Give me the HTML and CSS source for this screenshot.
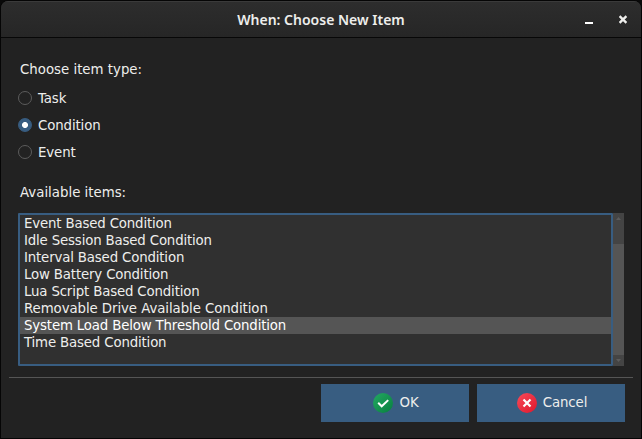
FILE: index.html
```html
<!DOCTYPE html>
<html lang="en">
<head>
<meta charset="utf-8">
<title>When: Choose New Item</title>
<link rel="stylesheet" href="styles.css">
</head>
<body>
<div class="window">
  <header class="titlebar">
    <h1 class="title">When: Choose New Item</h1>
    <div class="controls">
      <svg width="8" height="9" viewBox="0 0 8 9"><path d="M0 7h8v2H0z" fill="#fff"/></svg>
      <svg width="8" height="9" viewBox="0 0 8 9"><path d="M.6 1.100l6.800 6.800M7.400 1.100L.6 7.900" stroke="#eeeeec" stroke-width="2.300"/></svg>
    </div>
  </header>
  <main class="content">
    <p class="label">Choose item type:</p>
    <div class="radios">
      <div class="radio"><span class="dot"></span>Task</div>
      <div class="radio"><span class="dot checked"></span>Condition</div>
      <div class="radio"><span class="dot"></span>Event</div>
    </div>
    <p class="label items-label">Available items:</p>
    <div class="listbox">
      <ul class="list">
        <li>Event Based Condition</li>
        <li>Idle Session Based Condition</li>
        <li>Interval Based Condition</li>
        <li>Low Battery Condition</li>
        <li>Lua Script Based Condition</li>
        <li class="loose">Removable Drive Available Condition</li>
        <li class="selected">System Load Below Threshold Condition</li>
        <li>Time Based Condition</li>
      </ul>
      <div class="scrollbar">
        <svg width="11" height="11" viewBox="0 0 11 11"><path d="M3 7L5.500 4L8 7z" fill="#5c5c5c"/></svg>
        <div class="thumb"></div>
        <svg width="11" height="11" viewBox="0 0 11 11"><path d="M3 4L5.500 7L8 4z" fill="#5c5c5c"/></svg>
      </div>
    </div>
  </main>
  <footer class="footer">
    <div class="button">
      <svg width="20" height="20" viewBox="0 0 20 20"><defs><linearGradient id="g" x2="1" y2="1"><stop stop-color="#23a962"/><stop offset="1" stop-color="#087f3f"/></linearGradient></defs><circle cx="10" cy="10" r="10" fill="url(#g)"/><path d="M5.200 9.800l3.500 3.500 6.500-6.200" fill="none" stroke="#fff" stroke-width="2"/></svg>
      <span>OK</span>
    </div>
    <div class="button cancel">
      <svg width="20" height="20" viewBox="0 0 20 20"><defs><linearGradient id="r" x2="1" y2="1"><stop stop-color="#f84a59"/><stop offset="1" stop-color="#de172c"/></linearGradient></defs><circle cx="10" cy="10" r="10" fill="url(#r)"/><path d="M6.500 6.500l7 7M13.500 6.500l-7 7" stroke="#fff" stroke-width="2.200"/></svg>
      <span>Cancel</span>
    </div>
  </footer>
</div>
</body>
</html>
```
FILE: styles.css
```css
* { box-sizing: border-box; }
body {
  margin: 0;
  background: #090909;
  color: #eeeeec;
  font: 13.33px/17px "DejaVu Sans", sans-serif;
}
svg { display: block; }
.window {
  width: 642px;
  height: 439px;
  border: 1px solid #050505;
  border-radius: 8px 8px 0 0;
  background: #222;
  overflow: hidden;
}
.titlebar {
  display: grid;
  grid-template-columns: 70px 1fr 70px;
  align-items: center;
  height: 37px;
  border-top: 1px solid #3a3a3a;
  border-bottom: 1px solid #070707;
  background: linear-gradient(#2d2d2d, #262626);
}
.title {
  grid-column: 2;
  margin: 0;
  text-align: center;
  font: 600 14px/19px "Noto Sans", sans-serif;
}
.controls {
  display: flex;
  gap: 26px;
  padding-left: 14px;
}
.content { padding: 23px 17px 0; }
.label { margin: 0 2px; }
.radios { margin-top: 12px; }
.radio {
  display: flex;
  align-items: flex-start;
  gap: 6px;
  height: 17px;
  margin-bottom: 10px;
  letter-spacing: -0.12px;
}
.dot {
  width: 14px;
  height: 14px;
  margin-top: 1px;
  border: 1px solid #5c5c5c;
  border-radius: 50%;
}
.dot.checked {
  border-color: #385d81;
  background: radial-gradient(circle, #fff 2.6px, #385d81 3.4px);
}
.items-label { margin-top: 23px; }
.listbox {
  display: flex;
  height: 153px;
  margin-top: 12px;
}
.list {
  width: 595px;
  margin: 0;
  padding: 0;
  border: 2px solid #385d81;
  border-radius: 1px;
  background: #303030;
  list-style: none;
  letter-spacing: -0.16px;
}
.list li { padding-left: 4px; }
.list .loose { letter-spacing: -0.08px; }
.list .selected { background: #555; color: #fff; }
.scrollbar {
  display: flex;
  flex-direction: column;
  width: 11px;
  background: #444;
}
.thumb { flex: 1; margin-top: 20px; background: #555; }
.footer {
  display: flex;
  justify-content: flex-end;
  gap: 8px;
  margin: 11px 8px 0;
  padding: 6px 8px 0 0;
  border-top: 1px solid #555;
}
.button {
  display: flex;
  align-items: center;
  justify-content: center;
  gap: 6px;
  width: 148px;
  height: 38px;
  padding-left: 2px;
  background: #385d81;
  letter-spacing: -0.1px;
}
.button span { padding-bottom: 2px; }
```
